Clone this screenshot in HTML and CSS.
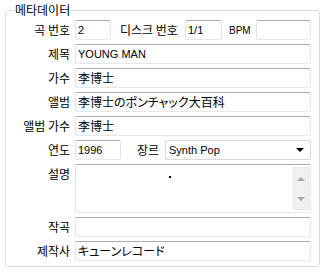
FILE: index.html
```html
<!DOCTYPE html>
<html>
<head>
    <title>메타데이터</title>
    <link rel="stylesheet" href="styles.css">
</head>
<body>
<!-- metadata group box -->
<fieldset class="group">
    <legend>메타데이터</legend>
    <div class="form">
        <span class="lbl">곡 번호</span>
        <div class="row">
            <div class="box num">2</div>
            <span class="sub disc-lbl">디스크 번호</span>
            <div class="box disc">1/1</div>
            <span class="bpm-lbl">BPM</span>
            <div class="box bpm"></div>
        </div>

        <span class="lbl">제목</span>
        <div class="box">YOUNG MAN</div>

        <span class="lbl">가수</span>
        <div class="box jp">李博士</div>

        <span class="lbl">앨범</span>
        <div class="box jp">李博士のポンチャック大百科</div>

        <span class="lbl">앨범 가수</span>
        <div class="box jp">李博士</div>

        <span class="lbl">연도</span>
        <div class="row">
            <div class="box year">1996</div>
            <span class="sub genre-lbl">장르</span>
            <div class="box select">
                <span>Synth Pop</span>
                <span class="drop"></span>
            </div>
        </div>

        <span class="lbl lbl-top">설명</span>
        <div class="box memo">
            <span class="dot"></span>
            <div class="scroll">
                <span class="arrow-up"></span>
                <span class="arrow-down"></span>
            </div>
        </div>

        <span class="lbl">작곡</span>
        <div class="box"></div>

        <span class="lbl">제작사</span>
        <div class="box jp">キューンレコード</div>
    </div>
</fieldset>
</body>
</html>
```

FILE: styles.css
```css
body {
    margin: 0;
    background-color: #FFFFFF;
    color: #000000;
    font-family: "Noto Sans CJK KR", sans-serif;
    font-size: 12px;
}
/* Group box */
.group {
    margin: 1px 7px 0 5px;
    padding: 1px 8px 5px 0;
    border: 1px solid #D5DFE5;
    border-radius: 3px;
    min-width: 0;
}
.group legend {
    margin-left: 8px;
    padding: 0 1px;
    line-height: 18px;
    font-size: 12px;
}
.form {
    display: grid;
    grid-template-columns: 64px 1fr;
    column-gap: 5px;
    row-gap: 4px;
    align-items: center;
}
.lbl {
    text-align: right;
    line-height: 20px;
    white-space: nowrap;
}
.lbl-top {
    align-self: start;
}
.row {
    display: flex;
    align-items: center;
}
.sub {
    line-height: 20px;
    white-space: nowrap;
}
/* Text boxes */
.box {
    height: 20px;
    box-sizing: border-box;
    border: 1px solid #E2E3EA;
    border-top-color: #ABADB3;
    border-bottom-color: #E3E9EF;
    border-radius: 2px;
    padding: 0 2px;
    font-family: "Liberation Sans", sans-serif;
    font-size: 11px;
    line-height: 18px;
    white-space: nowrap;
    overflow: hidden;
}
.jp {
    font-family: "Noto Sans CJK JP", sans-serif;
    font-size: 12px;
    font-feature-settings: "palt";
}
.num {
    width: 36px;
}
.disc-lbl {
    width: 62px;
    margin: 0 3px 0 9px;
}
.disc {
    width: 37px;
}
.bpm-lbl {
    width: 21px;
    margin: 0 6px 0 7px;
    font-family: "Liberation Sans", sans-serif;
    font-size: 10px;
}
.bpm {
    flex: 1;
}
.year {
    width: 46px;
}
.genre-lbl {
    width: 24px;
    margin: 0 4px 0 16px;
}
/* Combo box */
.select {
    flex: 1;
    display: flex;
    align-items: center;
    justify-content: space-between;
    border-color: #D9D9D9;
    padding-left: 3px;
}
.drop {
    margin-right: 4px;
    border-left: 4px solid transparent;
    border-right: 4px solid transparent;
    border-top: 4px solid #000000;
}
/* Multi-line box */
.memo {
    height: 49px;
    display: flex;
    align-items: flex-start;
    padding: 0;
}
.dot {
    width: 2px;
    height: 2px;
    margin: 11px 0 0 93px;
    background-color: #000000;
}
.scroll {
    width: 16px;
    height: 43px;
    box-sizing: border-box;
    margin: 2px 1px 0 auto;
    padding: 9px 0 8px;
    background-color: #F0F0F0;
    border: 1px solid #E8E8E8;
    display: flex;
    flex-direction: column;
    justify-content: space-between;
    align-items: center;
}
.arrow-up {
    border-left: 4px solid transparent;
    border-right: 4px solid transparent;
    border-bottom: 4px solid #A8A8A8;
}
.arrow-down {
    border-left: 4px solid transparent;
    border-right: 4px solid transparent;
    border-top: 4px solid #A8A8A8;
}
```
